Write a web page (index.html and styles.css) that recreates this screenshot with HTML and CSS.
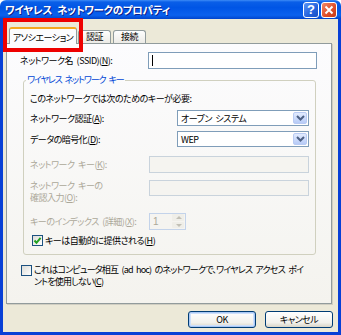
FILE: index.html
```html
<!DOCTYPE html>
<html lang="ja">
<head>
  <meta charset="UTF-8">
  <title>ワイヤレス ネットワークのプロパティ</title>
  <link rel="stylesheet" href="styles.css">
</head>
<body>

  <div class="window">
    <div class="titlebar">
      <span class="title">ワイヤレス ネットワークのプロパティ</span>
      <span class="cap-btn help">?</span>
      <span class="cap-btn close">
        <svg width="10" height="10" viewBox="0 0 10 10"><path d="M1.5 1.5 L8.5 8.5 M8.5 1.5 L1.5 8.5" stroke="#fff" stroke-width="2"/></svg>
      </span>
    </div>

    <div class="frame">
      <div class="tabs">
        <div class="tab selected">アソシエーション</div>
        <div class="tab">認証</div>
        <div class="tab">接続</div>
      </div>

      <div class="panel">
        <div class="ssid-row">
          <span class="ssid-label">ネットワーク名 (SSID)(<u>N</u>):</span>
          <div class="edit"><span class="caret"></span></div>
        </div>

        <fieldset class="group">
          <legend>ワイヤレス ネットワーク キー</legend>

          <div class="intro">このネットワークでは次のためのキーが必要:</div>

          <div class="row first">
            <span class="label">ネットワーク認証(<u>A</u>):</span>
            <div class="select">
              <span class="value">オープン システム</span>
              <span class="drop"><svg width="9" height="6" viewBox="0 0 9 6"><path d="M1 1 L4.5 4.5 L8 1" fill="none" stroke="#4d6185" stroke-width="2"/></svg></span>
            </div>
          </div>

          <div class="row enc">
            <span class="label">データの暗号化(<u>D</u>):</span>
            <div class="select">
              <span class="value">WEP</span>
              <span class="drop"><svg width="9" height="6" viewBox="0 0 9 6"><path d="M1 1 L4.5 4.5 L8 1" fill="none" stroke="#4d6185" stroke-width="2"/></svg></span>
            </div>
          </div>

          <div class="row key disabled">
            <span class="label">ネットワーク キー(<u>K</u>):</span>
            <div class="edit off"></div>
          </div>

          <div class="row confirm disabled">
            <span class="label">ネットワーク キーの<br>確認入力(<u>O</u>):</span>
            <div class="edit off"></div>
          </div>

          <div class="row index disabled">
            <span class="label">キーのインデックス (詳細)(<u>X</u>):</span>
            <div class="spin">
              <span class="spin-value">1</span>
              <span class="spin-arrows">
                <span class="up"></span>
                <span class="down"></span>
              </span>
            </div>
          </div>

          <div class="check-row auto">
            <span class="checkbox checked">
              <svg width="9" height="9" viewBox="0 0 9 9"><path d="M1.5 4.5 L3.5 6.8 L7.6 1.8" fill="none" stroke="#21a121" stroke-width="2"/></svg>
            </span>
            <span>キーは自動的に提供される(<u>H</u>)</span>
          </div>
        </fieldset>

        <div class="check-row adhoc">
          <span class="checkbox"></span>
          <span class="adhoc-text">これはコンピュータ相互 (ad hoc) のネットワークで、ワイヤレス アクセス ポイ<br>ントを使用しない(<u>C</u>)</span>
        </div>
      </div>

      <div class="buttons">
        <button class="default">OK</button>
        <button>キャンセル</button>
      </div>
    </div>

    <!-- 赤枠（注目箇所） -->
    <div class="highlight"></div>
  </div>

</body>
</html>
```

FILE: styles.css
```css
body {
  margin: 0;
  font-family: "Noto Sans CJK JP", "Liberation Sans", sans-serif;
  font-size: 9px;
  font-feature-settings: "palt";
  letter-spacing: -0.5px;
  word-spacing: 2px;
  color: #000;
}

u {
  text-decoration: underline;
}

.window {
  position: relative;
  width: 341px;
  height: 335px;
  display: flex;
  flex-direction: column;
}

/* タイトルバー */
.titlebar {
  height: 20px;
  display: flex;
  align-items: center;
  padding: 0 4px 0 5px;
  border-radius: 6px 6px 0 0;
  background: linear-gradient(#3d8cf6 0, #0a5fe8 2px, #0055e5 40%, #0a61ee 80%, #0044cc 100%);
}

.title {
  flex: 1;
  color: #fff;
  font-weight: bold;
  font-size: 10.5px;
  letter-spacing: -0.3px;
  word-spacing: 3px;
  text-shadow: 1px 1px #0a1f8a;
}

.cap-btn {
  width: 16px;
  height: 16px;
  box-sizing: border-box;
  margin-left: 2px;
  border: 1px solid #fff;
  border-radius: 3px;
  display: flex;
  align-items: center;
  justify-content: center;
  color: #fff;
  font-family: "Liberation Sans", sans-serif;
  font-weight: bold;
  font-size: 13px;
  letter-spacing: 0;
}

.help {
  background: linear-gradient(135deg, #5b94f6, #2462dc 60%, #1a4fc4);
}

.close {
  background: linear-gradient(135deg, #f08a6a, #e0502c 55%, #c63a18);
}

/* 本体 */
.frame {
  flex: 1;
  display: flex;
  flex-direction: column;
  padding: 8px 6px 4px 3px;
  background-color: #ece9d8;
  border: 3px solid #0840d6;
  border-top: none;
}

.tabs {
  display: flex;
  align-items: flex-end;
  height: 16px;
  padding-left: 3px;
}

.tab {
  height: 13px;
  box-sizing: border-box;
  padding: 0 7px;
  margin-right: 2px;
  line-height: 12px;
  white-space: nowrap;
  border: 1px solid #919b9c;
  border-bottom: none;
  border-radius: 3px 3px 0 0;
  background: linear-gradient(#fefefe, #ecebe6);
}

.tab.selected {
  height: 17px;
  width: 68px;
  padding: 2px 0 0;
  margin-right: 1px;
  margin-bottom: -1px;
  position: relative;
  z-index: 1;
  line-height: 13px;
  text-align: center;
  border-top: 2px solid #f5a81f;
  background: #fcfcfe;
}

.panel {
  height: 261px;
  box-sizing: border-box;
  padding: 8px 14px 0 14px;
  border: 1px solid #919b9c;
  box-shadow: 1px 1px #d0cec2;
  background: linear-gradient(#fcfcfe, #f4f3ee);
}

.ssid-row {
  display: flex;
  align-items: center;
  height: 17px;
}

.ssid-label {
  width: 128px;
  margin-left: -1px;
  flex-shrink: 0;
  white-space: nowrap;
}

.edit {
  flex: 1;
  height: 17px;
  box-sizing: border-box;
  border: 1px solid #7f9db9;
  background: #fff;
  display: flex;
  align-items: center;
  padding-left: 3px;
}

.caret {
  width: 1px;
  height: 11px;
  background: #000;
}

.edit.off {
  border-color: #c9d3dc;
  background: #f5f4f0;
}

/* グループボックス */
.group {
  margin: 5px 1px 0 2px;
  padding: 0 6px 8px 6px;
  border: 1px solid #d0d0bf;
  border-radius: 3px;
}

.group legend {
  margin-left: -4px;
  padding: 0 1px;
  line-height: 12px;
  letter-spacing: -1.1px;
  color: #0046d5;
}

.intro {
  margin-top: 7px;
  line-height: 12px;
}

.row {
  display: flex;
  align-items: center;
}

.row .label {
  width: 119px;
  flex-shrink: 0;
  white-space: nowrap;
}

.row.first {
  margin-top: 5px;
  height: 16px;
}

.row.enc {
  margin-top: 5px;
  height: 16px;
}

.row.key {
  margin-top: 9px;
  height: 16px;
}

.row.confirm {
  margin-top: 8px;
  align-items: flex-start;
}

.row.confirm .label {
  line-height: 12px;
}

.row.confirm .edit {
  height: 16px;
}

.row.index {
  margin-top: 9px;
  height: 17px;
}

.disabled {
  color: #aca899;
}

.select {
  margin-left: 28px;
  flex: 1;
  height: 16px;
  box-sizing: border-box;
  border: 1px solid #7f9db9;
  background: #fff;
  display: flex;
  align-items: center;
}

.select .value {
  flex: 1;
  padding-left: 3px;
}

.drop {
  width: 14px;
  height: 12px;
  margin-right: 1px;
  box-sizing: border-box;
  border: 1px solid #b9cbf3;
  border-radius: 2px;
  background: linear-gradient(#e2ebfe, #b7cbf7);
  display: flex;
  align-items: center;
  justify-content: center;
}

.spin {
  width: 37px;
  height: 17px;
  box-sizing: border-box;
  border: 1px solid #c3d3ea;
  background: #f5f4f0;
  display: flex;
  align-items: center;
}

.spin-value {
  flex: 1;
  padding-left: 3px;
  font-family: "Liberation Sans", sans-serif;
  letter-spacing: 0;
  font-size: 10px;
}

.spin-arrows {
  width: 13px;
  height: 15px;
  display: flex;
  flex-direction: column;
}

.spin-arrows span {
  flex: 1;
  margin: 0 1px 1px 0;
  border-radius: 1px;
  background: #efeee8;
  position: relative;
}

.spin-arrows .up::after,
.spin-arrows .down::after {
  content: "";
  position: absolute;
  left: 4px;
  top: 2px;
  border: 3px solid transparent;
}

.spin-arrows .up::after {
  border-top: none;
  border-bottom: 3px solid #c2c0b6;
}

.spin-arrows .down::after {
  border-bottom: none;
  border-top: 3px solid #c2c0b6;
}

/* チェックボックス */
.check-row {
  display: flex;
  align-items: flex-start;
}

.checkbox {
  width: 11px;
  height: 11px;
  box-sizing: border-box;
  flex-shrink: 0;
  border: 1px solid #1c5180;
  background: linear-gradient(135deg, #dcdcd7, #fff);
  display: flex;
  align-items: center;
  justify-content: center;
  margin-right: 2px;
}

.check-row.auto {
  margin-top: 5px;
  margin-left: 2px;
  line-height: 11px;
}

.check-row.adhoc {
  margin-top: 9px;
  line-height: 12px;
}

.check-row.adhoc .checkbox {
  margin-top: 1px;
}

.adhoc-text {
  white-space: nowrap;
  letter-spacing: -0.8px;
}

/* ボタン */
.buttons {
  display: flex;
  justify-content: flex-end;
  gap: 9px;
  margin-top: 7px;
  margin-right: -1px;
}

button {
  width: 68px;
  height: 17px;
  padding: 0;
  border: 1px solid #003c74;
  border-radius: 3px;
  background: linear-gradient(#fff, #f2f1ec 70%, #d9d5c8);
  font-family: "Noto Sans CJK JP", sans-serif;
  font-size: 9px;
  font-feature-settings: "palt";
  letter-spacing: -0.5px;
  line-height: 13px;
  color: #000;
}

button.default {
  box-shadow: inset 0 0 0 1px #a9c8f5, inset 0 0 0 2px #cee0fb;
}

/* 赤枠 */
.highlight {
  position: absolute;
  left: 3px;
  top: 18px;
  width: 80px;
  height: 34px;
  box-sizing: border-box;
  border: 4px solid #ee0000;
}
```
